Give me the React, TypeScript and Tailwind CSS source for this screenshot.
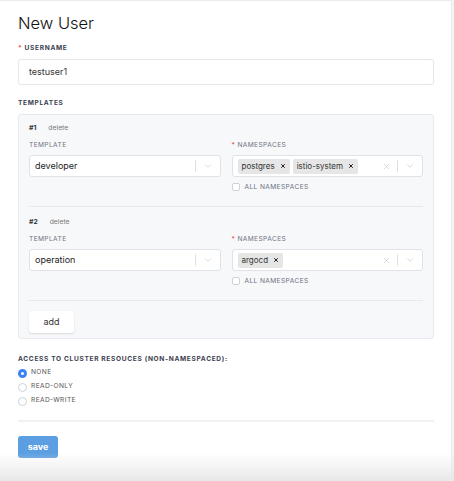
import { X, ChevronDown } from "lucide-react"

function Chip({ label }: { label: string }) {
  return (
    <span className="flex items-center gap-[5px] bg-[#e6e6e6] rounded-[2px] pl-[4px] pr-[4px] h-[15px] text-[8px] text-[#333]">
      {label}
      <X size={6} strokeWidth={4} className="text-[#222]" />
    </span>
  )
}

function Select({ value }: { value: string }) {
  return (
    <div className="flex items-center h-[22px] bg-white border border-[#dfe2e6] rounded-[3px] pl-[5px]">
      <span className="flex-1 text-[9px] text-[#222]">{value}</span>
      <span className="w-px h-[12px] bg-[#e1e1e1]" />
      <ChevronDown size={10} strokeWidth={1.5} className="text-[#c4c4c4] mx-[7px]" />
    </div>
  )
}

function MultiSelect({ values }: { values: string[] }) {
  return (
    <div className="flex items-center h-[22px] bg-white border border-[#dfe2e6] rounded-[3px] pl-[5px]">
      <div className="flex-1 flex gap-[3px]">
        {values.map((v) => (
          <Chip key={v} label={v} />
        ))}
      </div>
      <X size={9} strokeWidth={1.5} className="text-[#c4c4c4] mr-[6px]" />
      <span className="w-px h-[12px] bg-[#e1e1e1]" />
      <ChevronDown size={10} strokeWidth={1.5} className="text-[#c4c4c4] mx-[7px]" />
    </div>
  )
}

function TemplateRow({ n, template, namespaces }: { n: number; template: string; namespaces: string[] }) {
  return (
    <div className="pb-[14px] border-b border-[#e6e9ed] mb-[10px]">
      <div className="flex items-center gap-[12px] text-[6.8px] leading-[10px] h-[10px]">
        <span className="font-bold text-[#333]">#{n}</span>
        <span className="text-[#777]">delete</span>
      </div>
      <div className="grid grid-cols-2 gap-[11px] mt-[7px]">
        <div>
          <div className="text-[6.6px] leading-[10px] tracking-[0.06em] text-[#6b7280] h-[10px] mb-[5px]">TEMPLATE</div>
          <Select value={template} />
        </div>
        <div>
          <div className="text-[6.6px] leading-[10px] tracking-[0.06em] text-[#6b7280] h-[10px] mb-[5px]">
            <span className="text-[#e25555]">*</span> NAMESPACES
          </div>
          <MultiSelect values={namespaces} />
          <label className="flex items-center gap-[5px] mt-[5px] h-[10px] text-[6.6px] leading-[10px] tracking-[0.06em] text-[#6b7280]">
            <span className="w-[8px] h-[8px] border border-[#cfd3d8] rounded-[2px] bg-white" />
            ALL NAMESPACES
          </label>
        </div>
      </div>
    </div>
  )
}

function Radio({ label, checked }: { label: string; checked?: boolean }) {
  return (
    <div className="flex items-center gap-[4px] h-[14px] text-[6.6px] tracking-[0.06em] text-[#555]">
      {checked ? (
        <span className="w-[9px] h-[9px] rounded-full bg-[#3b82f6] flex items-center justify-center">
          <span className="w-[3px] h-[3px] rounded-full bg-white" />
        </span>
      ) : (
        <span className="w-[9px] h-[9px] rounded-full border border-[#cfd3d8] bg-white" />
      )}
      {label}
    </div>
  )
}

export default function App() {
  return (
    <div className="relative w-[454px] h-[481px] overflow-hidden bg-[#f3f4f6]" style={{ fontFamily: "Inter, 'Noto Sans', sans-serif" }}>
      <div className="w-[452px] h-[481px] bg-white border-t border-r border-[#e9ebee] px-[18px] pt-[11px]">
        <h1 className="text-[16.5px] font-light text-[#111] leading-[22px]">New User</h1>

        <div className="mt-[9px] text-[6.6px] leading-[10px] font-bold tracking-[0.1em] text-[#3d4250] h-[10px]">
          <span className="text-[#e25555]">*</span> USERNAME
        </div>
        <div className="mt-[6px] h-[26px] border border-[#e4e7eb] rounded-[3px] flex items-center px-[10px] text-[9px] text-[#333] w-[416px]">
          testuser1
        </div>

        <div className="mt-[13px] text-[6.6px] leading-[10px] font-bold tracking-[0.1em] text-[#3d4250] h-[10px]">TEMPLATES</div>
        <div className="mt-[6px] w-[416px] bg-[#f7f8fa] border border-[#e6e9ed] rounded-[3px] pt-[8px] px-[10px] pb-[5px]">
          <TemplateRow n={1} template="developer" namespaces={["postgres", "istio-system"]} />
          <TemplateRow n={2} template="operation" namespaces={["argocd"]} />
          <button className="block h-[22px] w-[45px] bg-white rounded-[3px] shadow-[0_1px_2px_rgba(0,0,0,0.12)] text-[9px] text-[#333]">
            add
          </button>
        </div>

        <div className="mt-[15px] text-[6.6px] leading-[10px] font-bold tracking-[0.1em] text-[#3d4250] h-[10px]">
          ACCESS TO CLUSTER RESOUCES (NON-NAMESPACED):
        </div>
        <div className="mt-[2px]">
          <Radio label="NONE" checked />
          <Radio label="READ-ONLY" />
          <Radio label="READ-WRITE" />
        </div>
        <div className="mt-[12px] border-t-2 border-[#f0f1f3] w-[416px]" />
        <button className="block mt-[14px] h-[22px] w-[40px] bg-[#5b9ee2] rounded-[3px] text-[9px] font-bold text-white">
          save
        </button>
      </div>
      <div className="absolute left-0 right-0 bottom-0 h-[28px] bg-gradient-to-b from-transparent to-[#e8e8e8]" />
    </div>
  )
}
